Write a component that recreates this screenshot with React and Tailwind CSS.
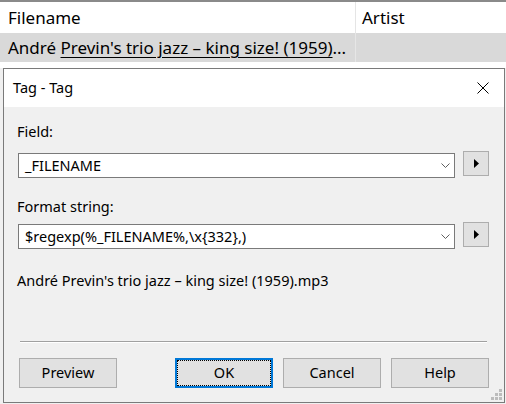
import React from 'react'

function Chevron() {
  return (
    <svg width="9" height="5" viewBox="0 0 9 5" className="shrink-0">
      <path d="M0.5 0.5 L4.5 4.5 L8.5 0.5" fill="none" stroke="#5f5f5f" strokeWidth="1" />
    </svg>
  )
}

function ArrowButton() {
  return (
    <div className="w-[26px] h-[25px] mt-[-2px] shrink-0 bg-[#e1e1e1] border border-[#adadad] flex items-center justify-center">
      <svg width="5" height="9" viewBox="0 0 5 9">
        <path d="M0 0 L5 4.5 L0 9 Z" fill="#000" />
      </svg>
    </div>
  )
}

function Combo({ value }) {
  return (
    <div className="flex items-start gap-[8px]">
      <div className="w-[437px] h-[25px] bg-white border border-[#7a7a7a] flex items-center pl-[6px] pr-[4px]">
        <span className="flex-1 whitespace-nowrap">{value}</span>
        <Chevron />
      </div>
      <ArrowButton />
    </div>
  )
}

function Button({ label, focused }) {
  return (
    <div
      className={
        focused
          ? 'relative w-[98px] h-[30px] bg-[#e1e1e1] border-2 border-[#0078d7] flex items-center justify-center'
          : 'w-[98px] h-[30px] bg-[#e1e1e1] border border-[#adadad] flex items-center justify-center'
      }
    >
      {label}
      {focused && <div className="absolute inset-0 border border-dotted border-black" />}
    </div>
  )
}

function SizeGrip() {
  const dots = [[8, 0], [4, 4], [8, 4], [0, 8], [4, 8], [8, 8]]
  return (
    <svg width="11" height="11" viewBox="0 0 11 11" className="absolute right-[2px] bottom-[2px]">
      {dots.map(([x, y], i) => (
        <rect key={i} x={x} y={y} width="3" height="3" fill="#bcbcbc" />
      ))}
    </svg>
  )
}

export default function App() {
  return (
    <div className="w-[506px] h-[404px] overflow-hidden bg-[#f0f0f0] text-black font-['Noto_Sans',sans-serif]">
      {/* list behind the dialog */}
      <div className="h-[68px] bg-white border-t-2 border-[#8a8a8a] text-[17px]">
        <div className="flex h-[31px]">
          <div className="w-[356px] pl-[8px] border-r border-[#e5e5e5] flex items-center">Filename</div>
          <div className="pl-[6px] flex items-center">Artist</div>
        </div>
        <div className="flex h-[29px] bg-[#d9d9d9]">
          <div className="w-[356px] pl-[8px] border-r border-[#e6e6e6] flex items-center whitespace-nowrap overflow-hidden">
            André&nbsp;
            <span className="underline underline-offset-[3px] decoration-1">Previn's trio jazz – king size! (1959)</span>
            ...
          </div>
        </div>
      </div>

      {/* dialog */}
      <div className="relative ml-[3px] w-[502px] h-[335px] border border-[#7a7a7a] bg-[#f0f0f0] flex flex-col text-[14.5px]">
        <div className="h-[38px] bg-white flex items-center justify-between pl-[9px] pr-[15px] shrink-0">
          <span>Tag - Tag</span>
          <svg width="12" height="12" viewBox="0 0 12 12">
            <path d="M0.5 0.5 L11.5 11.5 M11.5 0.5 L0.5 11.5" stroke="#000" strokeWidth="1" />
          </svg>
        </div>

        <div className="pl-[13px] pr-[15px] pt-[14px] flex flex-col">
          <div className="leading-[20px]">Field:</div>
          <div className="mt-[12px] ml-[1px]">
            <Combo value="_FILENAME" />
          </div>
          <div className="mt-[18px] leading-[20px]">Format string:</div>
          <div className="mt-[8px] ml-[1px]">
            <Combo value="$regexp(%_FILENAME%,\x{332},)" />
          </div>
          <div className="mt-[21px] leading-[20px] whitespace-nowrap">André Previn's trio jazz – king size! (1959).mp3</div>
        </div>

        <div className="flex-1" />

        <div className="pb-[14px]">
          <div className="ml-[16px] mr-[17px] border-t border-b border-t-[#a0a0a0] border-b-white" />
          <div className="mt-[15px] pl-[15px] pr-[15px] flex justify-between">
            <Button label="Preview" />
            <div className="flex gap-[10px]">
              <Button label="OK" focused />
              <Button label="Cancel" />
              <Button label="Help" />
            </div>
          </div>
        </div>

        <SizeGrip />
      </div>
    </div>
  )
}
